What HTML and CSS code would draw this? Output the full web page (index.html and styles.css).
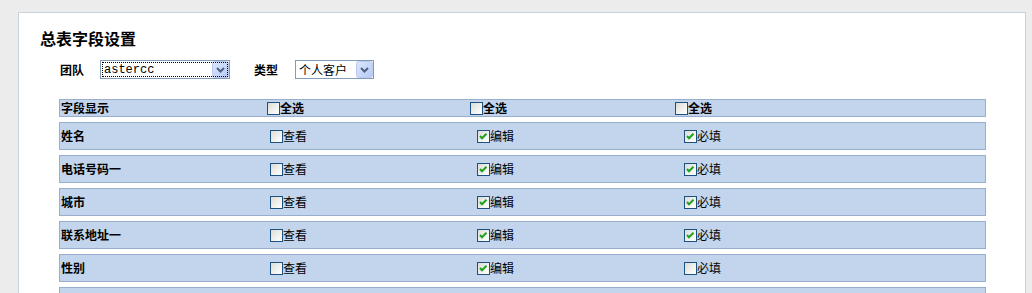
FILE: index.html
```html
<!DOCTYPE html>
<html lang="zh-CN">
  <head>
    <meta charset="UTF-8" />
    <title>总表字段设置</title>
    <link rel="stylesheet" href="styles.css">
  </head>
  <body>
    <div class="panel">
      <h1 class="title">总表字段设置</h1>

      <div class="filters">
        <label class="filter-label" for="group">团队</label>
        <select id="group" class="picker picker-group">
          <option>astercc</option>
        </select>
        <label class="filter-label type-label" for="type">类型</label>
        <select id="type" class="picker picker-type">
          <option>个人客户</option>
        </select>
      </div>

      <div class="fields">
        <div class="row head">
          <div class="cell name">字段显示</div>
          <label class="cell col-view"><input type="checkbox" />全选</label>
          <label class="cell col-edit"><input type="checkbox" />全选</label>
          <label class="cell col-req"><input type="checkbox" />全选</label>
        </div>

        <div class="row">
          <div class="cell name">姓名</div>
          <label class="cell col-view"><input type="checkbox" />查看</label>
          <label class="cell col-edit"><input type="checkbox" checked />编辑</label>
          <label class="cell col-req"><input type="checkbox" checked />必填</label>
        </div>

        <div class="row">
          <div class="cell name">电话号码一</div>
          <label class="cell col-view"><input type="checkbox" />查看</label>
          <label class="cell col-edit"><input type="checkbox" checked />编辑</label>
          <label class="cell col-req"><input type="checkbox" checked />必填</label>
        </div>

        <div class="row">
          <div class="cell name">城市</div>
          <label class="cell col-view"><input type="checkbox" />查看</label>
          <label class="cell col-edit"><input type="checkbox" checked />编辑</label>
          <label class="cell col-req"><input type="checkbox" checked />必填</label>
        </div>

        <div class="row">
          <div class="cell name">联系地址一</div>
          <label class="cell col-view"><input type="checkbox" />查看</label>
          <label class="cell col-edit"><input type="checkbox" checked />编辑</label>
          <label class="cell col-req"><input type="checkbox" checked />必填</label>
        </div>

        <div class="row">
          <div class="cell name">性别</div>
          <label class="cell col-view"><input type="checkbox" />查看</label>
          <label class="cell col-edit"><input type="checkbox" checked />编辑</label>
          <label class="cell col-req"><input type="checkbox" />必填</label>
        </div>

        <div class="row">
          <div class="cell name"></div>
          <label class="cell col-view"><input type="checkbox" /></label>
          <label class="cell col-edit"><input type="checkbox" checked /></label>
          <label class="cell col-req"><input type="checkbox" /></label>
        </div>
      </div>
    </div>
  </body>
</html>
```

FILE: styles.css
```css
* {
  margin: 0;
  padding: 0;
  box-sizing: border-box;
}

body {
  background-color: #ececec;
  font-family: "Noto Sans CJK SC", "DejaVu Sans", sans-serif;
  font-size: 12px;
  color: #000;
  overflow: hidden;
}

.panel {
  background-color: #fff;
  border: 1px solid #c9d2da;
  margin: 12px 6px 0 18px;
  padding: 16px 0 20px 21px;
  min-height: 400px;
}

.title {
  font-size: 16px;
  font-weight: bold;
  line-height: 19px;
  margin-bottom: 12px;
}

.filters {
  display: flex;
  align-items: center;
  padding-left: 20px;
  height: 19px;
}

.filter-label {
  font-weight: bold;
  width: 40px;
}

.type-label {
  margin-left: 24px;
  width: 41px;
}

.picker {
  appearance: none;
  -webkit-appearance: none;
  height: 19px;
  border: 1px solid #7f9db9;
  border-radius: 0;
  background-color: #fff;
  background-image: url("data:image/svg+xml,%3Csvg xmlns='http://www.w3.org/2000/svg' width='17' height='17'%3E%3Cdefs%3E%3ClinearGradient id='g' x1='0' y1='0' x2='1' y2='1'%3E%3Cstop offset='0' stop-color='%23dce8fc'/%3E%3Cstop offset='1' stop-color='%23b4c9f5'/%3E%3C/linearGradient%3E%3C/defs%3E%3Crect x='0.5' y='0.5' width='16' height='16' rx='2' fill='url(%23g)' stroke='%23bccbeb'/%3E%3Cpath d='M5 7l3.5 3.5L12 7' fill='none' stroke='%234d6185' stroke-width='2'/%3E%3C/svg%3E");
  background-repeat: no-repeat;
  background-position: right 0 center;
  font-size: 12px;
  color: #000;
  padding: 0 18px 0 3px;
}

.picker-group {
  width: 130px;
  font-family: "Liberation Mono", monospace;
  outline: 1px dotted #000;
  outline-offset: -3px;
}

.picker-type {
  width: 79px;
  font-family: "Noto Sans CJK SC", sans-serif;
}

.fields {
  margin: 20px 0 0 19px;
  width: 927px;
  display: flex;
  flex-direction: column;
  gap: 5px;
}

.row {
  display: grid;
  grid-template-columns: 206px 203px 205px 1fr;
  align-items: center;
  height: 28px;
  background-color: #c2d5ec;
  border: 1px solid #97afcc;
}

.row.head {
  height: 18px;
  font-weight: bold;
  align-items: end;
}

.cell {
  display: flex;
  align-items: center;
  line-height: 16px;
  min-height: 16px;
}

.name {
  font-weight: bold;
  padding-left: 1px;
}

.row .col-view {
  padding-left: 4px;
}

.row .col-edit {
  padding-left: 8px;
}

.row .col-req {
  padding-left: 10px;
}

.head .col-view,
.head .col-edit,
.head .col-req {
  padding-left: 1px;
}

input[type="checkbox"] {
  appearance: none;
  -webkit-appearance: none;
  width: 13px;
  height: 13px;
  margin: 0;
  border: 1px solid #1c5180;
  background: linear-gradient(135deg, #dcdcd6 0%, #f6f6f4 70%, #fff 100%);
  flex-shrink: 0;
}

input[type="checkbox"]:checked {
  background-image: url("data:image/svg+xml,%3Csvg xmlns='http://www.w3.org/2000/svg' width='11' height='11'%3E%3Cpath d='M2 5l2 2.2L8.5 2.8' fill='none' stroke='%2321a121' stroke-width='2'/%3E%3C/svg%3E"),
    linear-gradient(135deg, #dcdcd6 0%, #f6f6f4 70%, #fff 100%);
  background-repeat: no-repeat;
  background-position: center;
}
```
